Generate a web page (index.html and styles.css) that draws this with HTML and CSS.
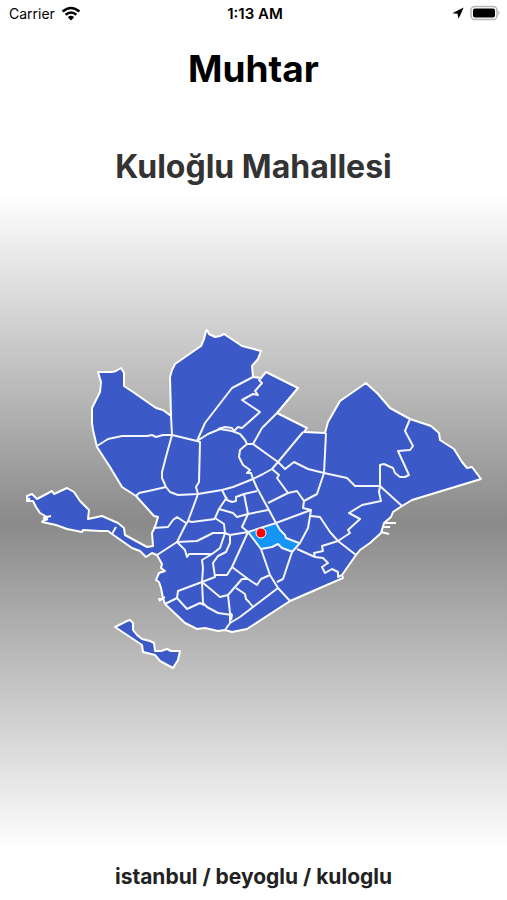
FILE: index.html
```html
<!DOCTYPE html>
<html lang="tr">
<head>
  <meta charset="UTF-8" />
  <meta name="viewport" content="width=device-width, initial-scale=1.0"/>
  <title>Muhtar</title>
  <link rel="stylesheet" href="styles.css">
</head>
<body>

<div class="app">
  <!-- Status bar -->
  <div class="status-bar">
    <div class="carrier">
      <span>Carrier</span>
      <svg class="wifi" width="20" height="15" viewBox="0 0 20 15" aria-hidden="true">
        <path d="M1.6 5.6Q10-1.6 18.4 5.6M4.6 8.8Q10 4.2 15.4 8.8" fill="none" stroke="#000" stroke-width="2.6"/>
        <path d="M6.8 11.2Q10 8.5 13.2 11.2L10 14.5Z"/>
      </svg>
    </div>
    <div class="clock">1:13 AM</div>
    <div class="indicators">
      <svg width="12" height="12" viewBox="0 0 12 12" aria-hidden="true">
        <path d="M11.6.6L.4 6.3L5.5 6.8L6.4 11.6L8.2 8.6Z"/>
      </svg>
      <svg width="31" height="16" viewBox="0 0 31 16" aria-hidden="true">
        <rect x="1" y="1.5" width="26" height="13" rx="4" fill="#fff" stroke="#b8b8b8" stroke-width="1.6"/>
        <rect x="3" y="3.5" width="22" height="9" rx="2"/>
        <path d="M28.3 5.5Q31 8 28.3 10.5Z" fill="#b8b8b8"/>
      </svg>
    </div>
  </div>

  <h1 class="title">Muhtar</h1>

  <!-- Map -->
  <main class="content">
    <h2 class="district">Kuloğlu Mahallesi</h2>
    <svg class="map" viewBox="0 320 507 360" role="img" aria-label="Beyoğlu">
      <path class="land" d="M98 372L112 372L116 371L121 368L124 373L124 386L133 392L156 408L163 410L171 416L170 377L172 370L175 364L201 346L204 339L206 331L207 330L209 334L215 337L220 336L224 334L242 346L250 348L261 351L258 359L252 366L253 377L261 378L266 372L298 388L277 413L307 428L304 432L325 433L328 422L340 401L366 383L378 394L390 408L410 419L431 426L439 433L440 440L454 449L462 462L467 468L472 467L481 479L412 500L402 506L393 512L391 517L384 523L381 533L370 543L360 550L356 555L342 575L343 578L290 601L247 629L232 632L225 630L218 631L205 628L197 629L185 623L165 604L163 598L161 588L159 582L156 580L159 573L165 571L161 568L162 564L157 555L152 553L146 557L140 551L132 548L112 534L108 531L100 531L83 530L82 532L67 529L56 525L42 522L47 517L40 513L36 507L33 501L27 501L27 496L32 494L37 499L52 491L54 494L67 488L74 492L80 501L89 510L88 519L102 516L118 523L124 528L125 535L147 547L153 546L152 533L155 527L158 517L154 516L136 496L122 487L110 467L97 447L93 430L92 423L92 408L100 392L101 382Z"/>
      <path class="land" d="M115 627L127 621L130 620L133 623L133 630L137 635L142 639L150 641L154 643L155 651L161 651L167 649L171 651L180 651L178 660L173 668L160 661L155 655L143 652L142 645Z"/>
      <path class="selected" d="M248 532L276 523L280 530L285 535L286 538L299 543L293 552L282 548L278 544L272 547L261 549Z"/>
      <g class="borders">
        <path d="M97 446L108 439L122 436L147 436L152 435L156 437L163 435L172 435L197 441L208 434L220 429L232 431L240 434L245 440L247 444L253 444L262 428L277 413"/>
        <path d="M171 416L172 435L167 453L162 472L162 478L166 487L170 492L178 495L198 494L222 490L233 487L253 479L263 474L272 469L278 462L303 432"/>
        <path d="M136 496L139 493L153 490L166 487"/>
        <path d="M197 441L205 423L232 388L253 377M197 441L200 442L199 482L196 487L198 494L188 521L185 526L177 542L157 555"/>
        <path d="M218 429L225 427L232 428L234 431L238 427L242 428L260 412L242 400L253 394L258 395L255 391L262 383L259 380L261 378"/>
        <path d="M247 444L240 450L239 457L243 465L250 470L247 473L251 473L253 479L257 488L276 523"/>
        <path d="M253 444L278 462L285 469L294 462L308 469L324 473L326 433M324 473L347 478L355 486L380 486L402 506"/>
        <path d="M380 486L380 465L384 464L393 468L395 473L400 477L405 477L409 475L398 451L410 450L413 446L405 431L410 419"/>
        <path d="M380 486L379 492L381 501L362 505L349 513L360 519L348 530L350 533L338 541L322 546L323 551L314 553L315 557"/>
        <path d="M324 473L317 494L304 501L303 508L311 510L308 528L300 543L292 552L283 579L277 582"/>
        <path d="M272 469L279 475L277 478L288 493L297 491L304 501M268 503L288 493M276 523L311 510"/>
        <path d="M311 516L320 517L330 532L338 541L356 555M276 523L280 530L285 535L286 538L299 543"/>
        <path d="M257 491L244 494L236 497L236 501L232 502L227 500L222 490M244 494L248 514L242 527L248 532"/>
        <path d="M227 497L219 509L215 518L224 524L225 533M219 509L233 513L237 517L248 514L268 510"/>
        <path d="M188 521L192 522L215 519M186 523L177 517L173 520L168 527L153 528"/>
        <path d="M177 542L197 541L213 533L225 533L230 535L248 532L276 523"/>
        <path d="M177 542L185 550L187 557L189 554L212 554L220 548L225 533M212 554L202 560L203 568L202 582"/>
        <path d="M230 535L230 543L226 552L218 556L213 563L215 577L202 582L178 591L177 598L165 604"/>
        <path d="M215 575L227 575L232 567L248 532L261 549L270 575L278 588L290 601"/>
        <path d="M232 567L248 579L257 585L261 579L270 575M248 579L242 579L228 595L230 613L230 623L225 630"/>
        <path d="M202 582L203 603L207 607L218 613L232 615M202 582L220 597L228 595M177 598L187 609L200 603L204 605"/>
        <path d="M278 588L253 607L240 617L230 623M236 588L245 594L246 599L249 602L253 607M230 613L232 615L231 620"/>
        <path d="M261 549L272 547L278 544L282 548L293 552M297 549L315 557L323 558L328 563L322 567L325 573L332 569L338 572L338 577L342 575"/>
        <path d="M112 534L116 527"/>
      </g>
      <!-- Piers and shore details -->
      <path class="shore" d="M385 523H396M382 527H390M381 532L389 534M43 518L51 516M43 521L48 519M158 599H163M159 601L165 597M27 501L30 498"/>
      <circle class="pin" cx="261" cy="533" r="5"/>
    </svg>
  </main>

  <footer class="path">istanbul / beyoglu / kuloglu</footer>
</div>

</body>
</html>
```

FILE: styles.css
```css
* {
  margin: 0;
  padding: 0;
  box-sizing: border-box;
  font-family: Inter, sans-serif;
}

body {
  background: #fff;
  color: #000;
}

.app {
  min-height: 100vh;
  display: flex;
  flex-direction: column;
  text-align: center;
}

.status-bar {
  display: grid;
  grid-template-columns: 1fr auto 1fr;
  align-items: center;
  height: 26px;
  padding: 0 6px 0 9px;
  font-size: 14px;
}

.carrier {
  display: flex;
  align-items: center;
  gap: 6px;
}

.clock {
  font-size: 15px;
  font-weight: 600;
}

.indicators {
  display: flex;
  align-items: center;
  justify-content: flex-end;
  gap: 6px;
}

.title {
  padding-top: 18px;
  font-size: 37px;
  line-height: 50px;
  font-weight: 700;
}

.content {
  flex: 1;
  display: flex;
  flex-direction: column;
  margin-top: 50px;
  background: linear-gradient(#fff 7%, #8a8a8a 53%, #fff 99%);
}

.district {
  padding-top: 3px;
  color: #333;
  font-size: 32px;
  line-height: 40px;
  font-weight: 700;
}

.map {
  display: block;
  width: 100%;
  margin: 133px 0;
}

.land {
  fill: #3b59c7;
  stroke: #fff;
  stroke-width: 2;
  stroke-linejoin: round;
}

.selected {
  fill: #1495f5;
}

.borders {
  fill: none;
  stroke: #f4f6ff;
  stroke-width: 2;
  stroke-linejoin: round;
}

.shore {
  fill: none;
  stroke: #fff;
  stroke-width: 2;
}

.pin {
  fill: #f00;
  stroke: #fff;
  stroke-width: 1;
}

.path {
  padding: 4px 0 8px;
  color: #222;
  font-size: 21px;
  line-height: 30px;
  font-weight: 700;
}
```
